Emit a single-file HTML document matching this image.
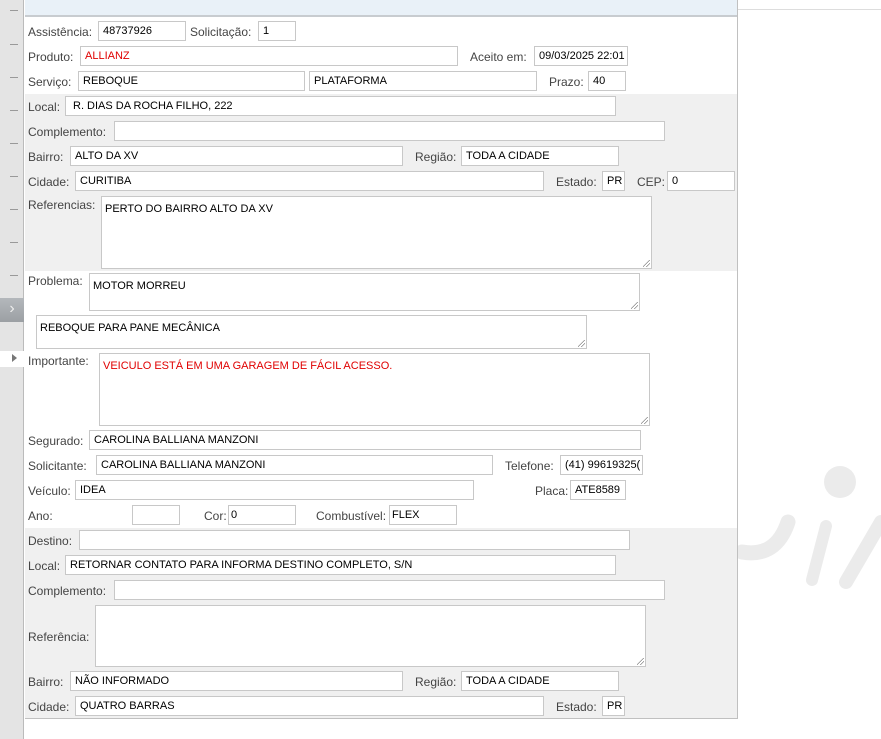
<!DOCTYPE html>
<html><head><meta charset="utf-8"><style>
*{margin:0;padding:0;box-sizing:border-box}
body{width:881px;height:739px;background:#fff;position:relative;overflow:hidden;font-family:"Liberation Sans","DejaVu Sans",sans-serif;}
.a{position:absolute}
.l{position:absolute;font-size:12px;color:#444;line-height:22px;white-space:nowrap}
.b{position:absolute;height:20px;border:1px solid #c8c8c8;background:#fff;font-size:11px;color:#000;line-height:19px;padding-left:4px;white-space:nowrap;overflow:hidden}
.t{position:absolute;border:1px solid #c8c8c8;background:#fff;font-size:11px;color:#000;padding:6px 3px;}
.t:after{content:"";position:absolute;right:1px;bottom:1px;width:7px;height:7px;background:linear-gradient(135deg,transparent 45%,#888 46%,#888 52%,transparent 53%,transparent 70%,#888 71%,#888 77%,transparent 78%)}
.r{color:#e00000}
.tick{position:absolute;left:10px;width:8px;height:1px;background:#999}
</style></head><body>
<div class="a" style="left:0;top:0;width:24px;height:739px;background:#e4e4e4;border-right:1px solid #bbb"></div>
<div class="tick" style="top:10px"></div><div class="tick" style="top:44px"></div><div class="tick" style="top:77px"></div><div class="tick" style="top:110px"></div><div class="tick" style="top:143px"></div><div class="tick" style="top:176px"></div><div class="tick" style="top:209px"></div><div class="tick" style="top:242px"></div><div class="tick" style="top:275px"></div>
<div class="a" style="left:0;top:298px;width:24px;height:24px;background:linear-gradient(#b4b8bc,#9ca0a4);color:#eee;font-size:16px;line-height:22px;text-align:center">›</div>
<div class="a" style="left:0;top:351px;width:24px;height:16px;background:#fff"></div>
<div class="a" style="left:12px;top:354px;width:0;height:0;border-left:5px solid #777;border-top:4px solid transparent;border-bottom:4px solid transparent"></div>
<div class="a" style="left:737px;top:9px;width:144px;height:1px;background:#ddd"></div>
<div class="a" style="left:25px;top:0;width:713px;height:719px;border-right:1px solid #c0c0c0;border-bottom:1px solid #c0c0c0"></div>
<div class="a" style="left:25px;top:0;width:712px;height:17px;background:#e9f1f8;border-bottom:2px solid #c8ccd0"></div>
<div class="a" style="left:25px;top:94px;width:712px;height:177px;background:#f0f0f0"></div>
<div class="a" style="left:25px;top:528px;width:712px;height:190px;background:#f0f0f0"></div>
<svg class="a" style="left:738px;top:440px" width="143" height="160"><g fill="#ebebeb" stroke="#ebebeb" stroke-linecap="round"><circle cx="102" cy="42" r="16" stroke="none"/><path d="M4 112 Q 38 118 50 82" fill="none" stroke-width="15"/><path d="M88 86 L 74 140" fill="none" stroke-width="12"/><path d="M108 142 L 143 82" fill="none" stroke-width="14"/></g></svg>

<div class="l" style="left:28px;top:21px">Assistência:</div><div class="b" style="left:98px;top:21px;width:88px">48737926</div>
<div class="l" style="left:190px;top:21px">Solicitação:</div><div class="b" style="left:258px;top:21px;width:38px">1</div>
<div class="l" style="left:28px;top:46px">Produto:</div><div class="b r" style="left:80px;top:46px;width:378px">ALLIANZ</div>
<div class="l" style="left:470px;top:46px">Aceito em:</div><div class="b" style="left:534px;top:46px;width:94px">09/03/2025 22:01</div>
<div class="l" style="left:28px;top:71px">Serviço:</div><div class="b" style="left:78px;top:71px;width:227px">REBOQUE</div><div class="b" style="left:309px;top:71px;width:228px">PLATAFORMA</div>
<div class="l" style="left:549px;top:71px">Prazo:</div><div class="b" style="left:588px;top:71px;width:38px">40</div>
<div class="l" style="left:28px;top:96px">Local:</div><div class="b" style="left:65px;top:96px;width:551px;padding-left:7px">R. DIAS DA ROCHA FILHO, 222</div>
<div class="l" style="left:28px;top:121px">Complemento:</div><div class="b" style="left:114px;top:121px;width:551px"></div>
<div class="l" style="left:28px;top:146px">Bairro:</div><div class="b" style="left:70px;top:146px;width:333px">ALTO DA XV</div>
<div class="l" style="left:415px;top:146px">Região:</div><div class="b" style="left:461px;top:146px;width:158px">TODA A CIDADE</div>
<div class="l" style="left:28px;top:171px">Cidade:</div><div class="b" style="left:75px;top:171px;width:469px">CURITIBA</div>
<div class="l" style="left:556px;top:171px">Estado:</div><div class="b" style="left:602px;top:171px;width:23px">PR</div>
<div class="l" style="left:637px;top:171px">CEP:</div><div class="b" style="left:667px;top:171px;width:68px">0</div>
<div class="l" style="left:28px;top:194px">Referencias:</div><div class="t" style="left:101px;top:196px;width:551px;height:73px">PERTO DO BAIRRO ALTO DA XV</div>
<div class="l" style="left:28px;top:270px">Problema:</div><div class="t" style="left:89px;top:273px;width:551px;height:38px">MOTOR MORREU</div>
<div class="t" style="left:36px;top:315px;width:551px;height:34px">REBOQUE PARA PANE MECÂNICA</div>
<div class="l" style="left:28px;top:350px">Importante:</div><div class="t r" style="left:99px;top:353px;width:551px;height:73px">VEICULO ESTÁ EM UMA GARAGEM DE FÁCIL ACESSO.</div>
<div class="l" style="left:28px;top:430px">Segurado:</div><div class="b" style="left:89px;top:430px;width:552px">CAROLINA BALLIANA MANZONI</div>
<div class="l" style="left:28px;top:455px">Solicitante:</div><div class="b" style="left:96px;top:455px;width:397px">CAROLINA BALLIANA MANZONI</div>
<div class="l" style="left:505px;top:455px">Telefone:</div><div class="b" style="left:560px;top:455px;width:83px">(41) 99619325(</div>
<div class="l" style="left:28px;top:480px">Veículo:</div><div class="b" style="left:75px;top:480px;width:399px">IDEA</div>
<div class="l" style="left:535px;top:480px">Placa:</div><div class="b" style="left:570px;top:480px;width:56px">ATE8589</div>
<div class="l" style="left:28px;top:505px">Ano:</div><div class="b" style="left:132px;top:505px;width:48px"></div>
<div class="l" style="left:204px;top:505px">Cor:</div><div class="b" style="left:228px;top:505px;width:68px;padding-left:2px">0</div>
<div class="l" style="left:316px;top:505px">Combustível:</div><div class="b" style="left:389px;top:505px;width:68px;padding-left:2px">FLEX</div>
<div class="l" style="left:28px;top:530px">Destino:</div><div class="b" style="left:79px;top:530px;width:551px"></div>
<div class="l" style="left:28px;top:555px">Local:</div><div class="b" style="left:65px;top:555px;width:551px">RETORNAR CONTATO PARA INFORMA DESTINO COMPLETO, S/N</div>
<div class="l" style="left:28px;top:580px">Complemento:</div><div class="b" style="left:114px;top:580px;width:551px"></div>
<div class="l" style="left:28px;top:626px">Referência:</div><div class="t" style="left:95px;top:605px;width:551px;height:62px"></div>
<div class="l" style="left:28px;top:671px">Bairro:</div><div class="b" style="left:70px;top:671px;width:333px">NÃO INFORMADO</div>
<div class="l" style="left:415px;top:671px">Região:</div><div class="b" style="left:461px;top:671px;width:158px">TODA A CIDADE</div>
<div class="l" style="left:28px;top:696px">Cidade:</div><div class="b" style="left:75px;top:696px;width:469px">QUATRO BARRAS</div>
<div class="l" style="left:556px;top:696px">Estado:</div><div class="b" style="left:602px;top:696px;width:23px">PR</div>
</body></html>
